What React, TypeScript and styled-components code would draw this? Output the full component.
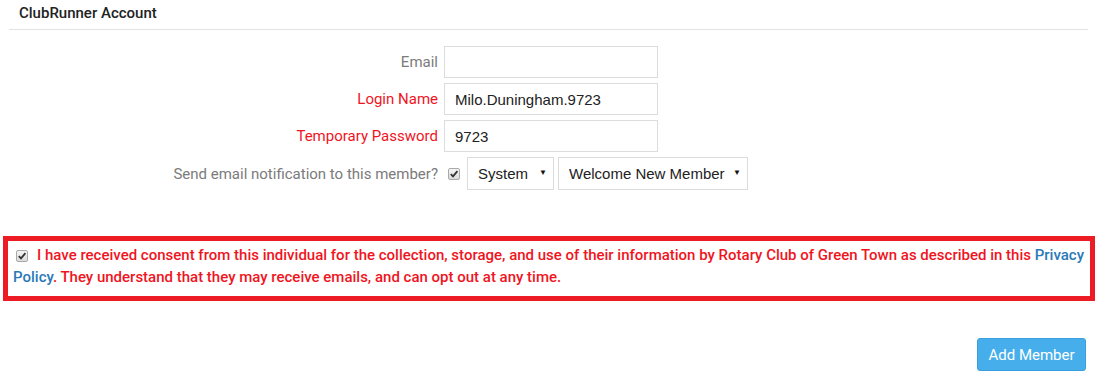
import React from "react";
import styled, { createGlobalStyle } from "styled-components";

const Global = createGlobalStyle`
  html, body { margin: 0; padding: 0; background: #fff; }
  body { font-family: Roboto, "Liberation Sans", Arial, sans-serif; }
  * { box-sizing: border-box; }
`;

const Page = styled.div`
  width: 1104px;
  height: 384px;
  overflow: hidden;
  display: flex;
  flex-direction: column;
`;

const Section = styled.div`
  margin: 0 16px 0 9px;
  border-bottom: 1px solid #e3e3e3;
  padding: 5px 10px 8px;
`;

const Title = styled.h3`
  margin: 0;
  font-size: 15px;
  font-weight: 500;
  color: #222;
  line-height: 16px;
`;

const Form = styled.div`
  display: grid;
  grid-template-columns: 438px auto;
  column-gap: 6px;
  row-gap: 5px;
  margin-top: 16px;
  align-items: center;
`;

const Label = styled.label<{ $required?: boolean }>`
  justify-self: end;
  font-size: 15px;
  color: ${(p) => (p.$required ? "#f0141e" : "#7b7b7b")};
`;

const TextInput = styled.input`
  width: 214px;
  height: 32px;
  border: 1px solid #dcdcdc;
  padding: 0 10px;
  font-family: "Liberation Sans", Arial, sans-serif;
  font-size: 15px;
  color: #222;
  outline: none;
`;

const Controls = styled.div`
  display: flex;
  align-items: center;
  gap: 4px;
  height: 33px;
`;

const Check = styled.span`
  display: inline-flex;
  align-items: center;
  justify-content: center;
  width: 12px;
  height: 12px;
  border: 1px solid #a9a9a9;
  border-radius: 2px;
  background: linear-gradient(#f4f4f4, #dcdcdc);
  flex: none;
`;

const CheckBox = () => (
  <Check>
    <svg width="10" height="10" viewBox="0 0 10 10">
      <path d="M1.8 5.2 L4 7.4 L8.4 2.2" fill="none" stroke="#333" strokeWidth="1.8" />
    </svg>
  </Check>
);

const RowCheck = styled.span`
  display: inline-flex;
  margin: 0 3px 0 4px;
`;

const SelectWrap = styled.div<{ $w: number }>`
  position: relative;
  width: ${(p) => p.$w}px;
  height: 33px;
  &::after {
    content: "▼";
    position: absolute;
    right: 7px;
    top: 11px;
    font-size: 8px;
    color: #111;
    pointer-events: none;
  }
`;

const Select = styled.select`
  appearance: none;
  -webkit-appearance: none;
  width: 100%;
  height: 100%;
  border: 1px solid #dcdcdc;
  border-radius: 0;
  background: #fff;
  padding: 0 0 0 10px;
  font-family: "Liberation Sans", Arial, sans-serif;
  font-size: 15px;
  color: #222;
  outline: none;
`;

const Consent = styled.div`
  margin: 46px 9px 0 3px;
  border: 5px solid #ed1c24;
  padding: 4px 2px 8px 5px;
  font-size: 15px;
  font-weight: 500;
  line-height: 21px;
  color: #f0141e;
  white-space: nowrap;
`;

const ConsentCheck = styled.span`
  display: inline-block;
  vertical-align: -1px;
  margin: 0 9px 0 3px;
`;

const Link = styled.a`
  color: #2a7ab8;
  text-decoration: none;
`;

const Footer = styled.div`
  display: flex;
  justify-content: flex-end;
  padding: 37px 18px 0 0;
`;

const Button = styled.button`
  height: 33px;
  width: 109px;
  padding: 0;
  border: 1px solid #3a9fdd;
  border-radius: 3px;
  background: #47aeec;
  color: #fff;
  font-family: Roboto, sans-serif;
  font-size: 15px;
`;

export default function App() {
  return (
    <>
      <Global />
      <Page>
        <Section>
          <Title>ClubRunner Account</Title>
        </Section>
        <Form>
          <Label>Email</Label>
          <TextInput defaultValue="" />
          <Label $required>Login Name</Label>
          <TextInput defaultValue="Milo.Duningham.9723" />
          <Label $required>Temporary Password</Label>
          <TextInput defaultValue="9723" />
          <Label>Send email notification to this member?</Label>
          <Controls>
            <RowCheck>
              <CheckBox />
            </RowCheck>
            <SelectWrap $w={87}>
              <Select defaultValue="System">
                <option>System</option>
              </Select>
            </SelectWrap>
            <SelectWrap $w={190}>
              <Select defaultValue="Welcome New Member">
                <option>Welcome New Member</option>
              </Select>
            </SelectWrap>
          </Controls>
        </Form>
        <Consent>
          <ConsentCheck>
            <CheckBox />
          </ConsentCheck>
          I have received consent from this individual for the collection, storage, and use of their information by
          Rotary Club of Green Town as described in this <Link href="#">Privacy</Link>
          <br />
          <Link href="#">Policy</Link>. They understand that they may receive emails, and can opt out at any time.
        </Consent>
        <Footer>
          <Button>Add Member</Button>
        </Footer>
      </Page>
    </>
  );
}
